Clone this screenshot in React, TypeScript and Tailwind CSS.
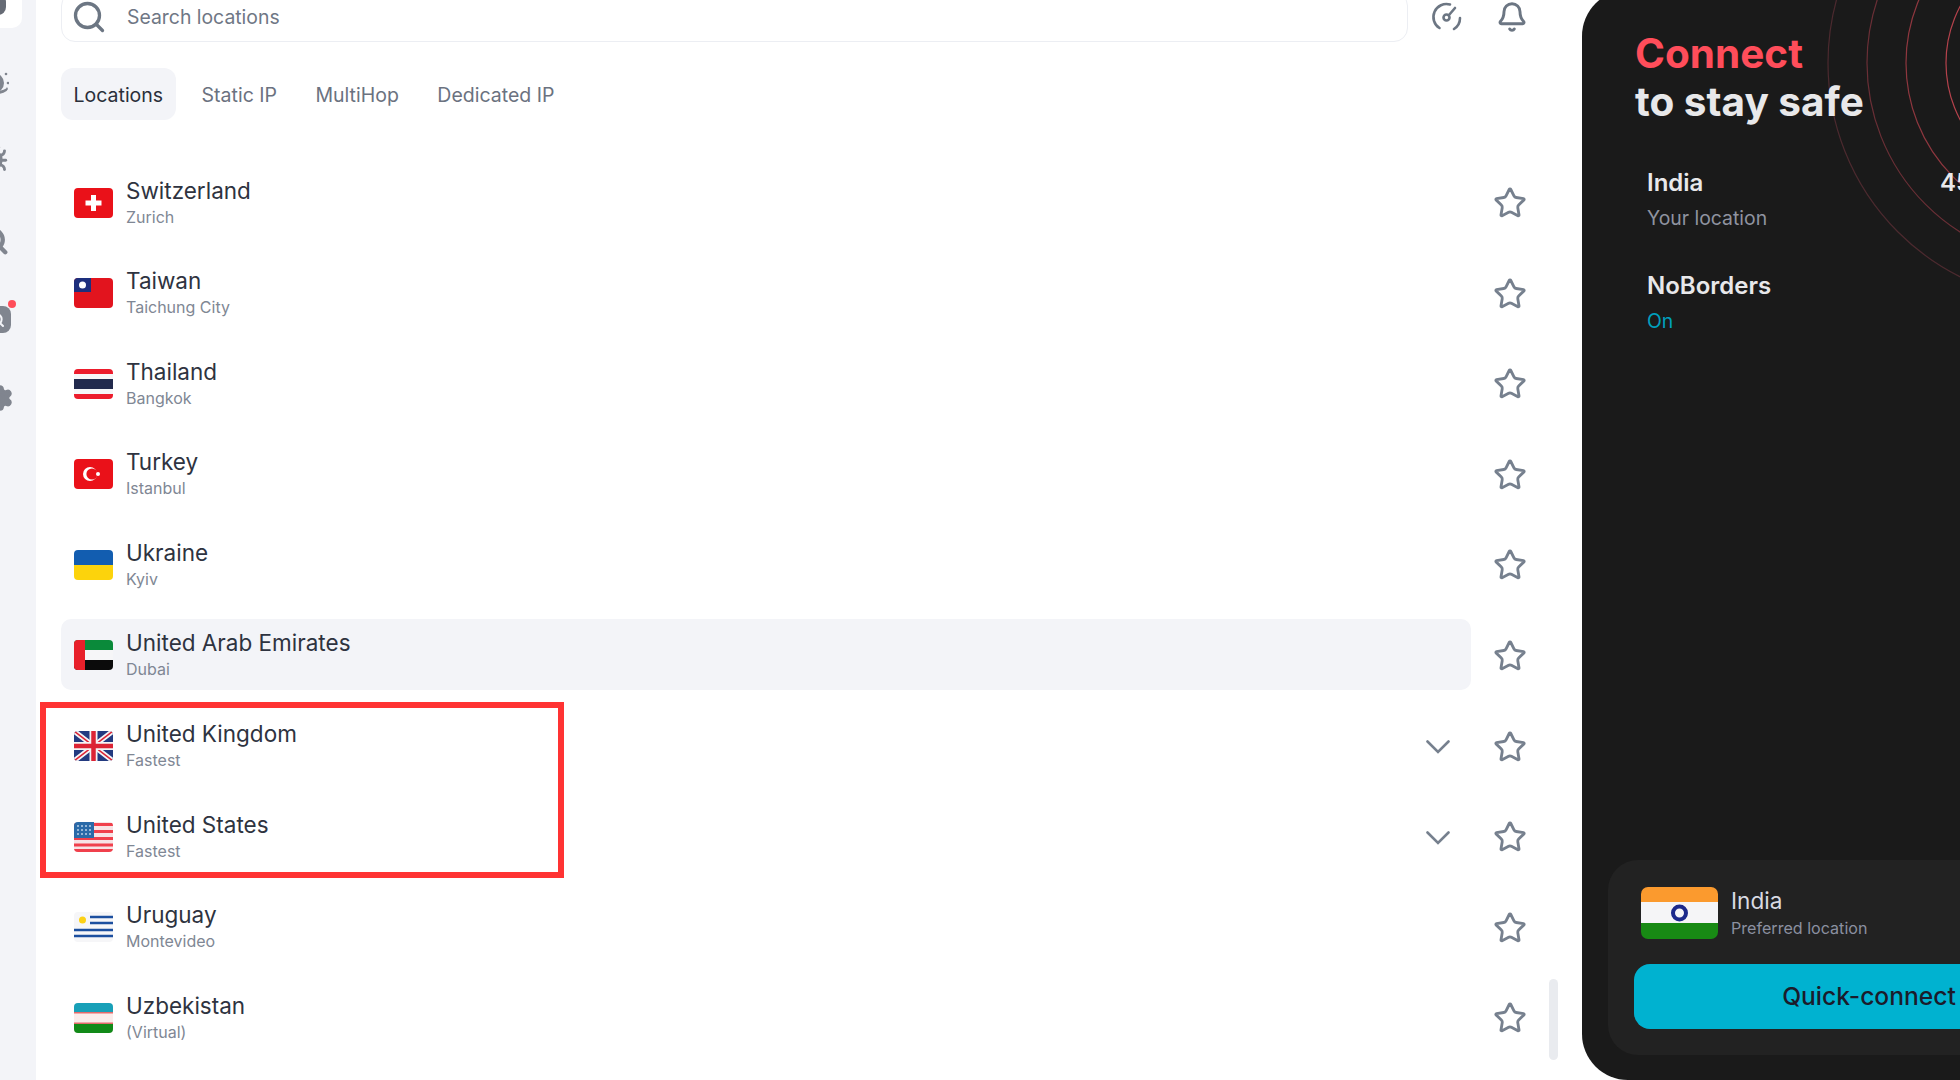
import { Bell, Bug, Search, Settings, Star } from "lucide-react";
import type { ReactNode } from "react";

function FlagBox({ children }: { children: ReactNode }) {
  return (
    <svg viewBox="0 0 39 30" className="mt-[2px] h-[30px] w-[39px] shrink-0 rounded-[4px]">
      {children}
    </svg>
  );
}

const flags: Record<string, ReactNode> = {
  ch: (
    <>
      <rect width="39" height="30" fill="#ea1119" />
      <path d="M17 7h5v5.500h5.500v5H22V23h-5v-5.500h-5.500v-5H17z" fill="#fff" />
    </>
  ),
  tw: (
    <>
      <rect width="39" height="30" fill="#e2141e" />
      <rect width="17" height="14" fill="#1d2f7d" />
      <circle cx="8.500" cy="7" r="3.500" fill="#fff" />
    </>
  ),
  th: (
    <>
      <rect width="39" height="30" fill="#ec1c2c" />
      <rect y="5" width="39" height="20" fill="#f6f6f8" />
      <rect y="10" width="39" height="10" fill="#222a4d" />
    </>
  ),
  tr: (
    <>
      <rect width="39" height="30" fill="#ea1119" />
      <circle cx="16" cy="15" r="7" fill="#fff" />
      <circle cx="18" cy="15" r="5.600" fill="#ea1119" />
      <circle cx="24" cy="15" r="2" fill="#fff" />
    </>
  ),
  ua: (
    <>
      <rect width="39" height="15" fill="#125db0" />
      <rect y="15" width="39" height="15" fill="#fcd30c" />
    </>
  ),
  ae: (
    <>
      <rect width="39" height="10" fill="#0a8a3a" />
      <rect y="10" width="39" height="10" fill="#f6f6f8" />
      <rect y="20" width="39" height="10" fill="#0b0b0b" />
      <rect width="11" height="30" fill="#e8202a" />
    </>
  ),
  gb: (
    <>
      <rect width="39" height="30" fill="#233a80" />
      <path d="M0 0l39 30M39 0L0 30" stroke="#f4f4f6" strokeWidth="5" />
      <path d="M0 0l39 30M39 0L0 30" stroke="#dc2435" strokeWidth="1.500" />
      <path d="M19.500 0v30M0 15h39" stroke="#f4f4f6" strokeWidth="8" />
      <path d="M19.500 0v30M0 15h39" stroke="#dc2435" strokeWidth="4.500" />
    </>
  ),
  us: (
    <>
      <rect width="39" height="30" fill="#f7e3e5" />
      <path d="M0 2.500h39M0 9.500h39M0 16.500h39M0 23h39M0 28.500h39" stroke="#f0404c" strokeWidth="3" />
      <rect width="20" height="16" fill="#2a6aa8" />
      <path d="M3 4h14M3 8h14M3 12h14" stroke="#b9d0e6" strokeWidth="1.500" strokeDasharray="2 2" />
    </>
  ),
  uy: (
    <>
      <rect width="39" height="30" fill="#f6f6f8" />
      <path d="M16 5h23M16 11h23M0 18h39M0 24h39" stroke="#1c4f9f" strokeWidth="2.500" />
      <circle cx="8.500" cy="8" r="3.500" fill="#fcd116" />
    </>
  ),
  uz: (
    <>
      <rect width="39" height="30" fill="#fbeceb" />
      <rect width="39" height="9" fill="#18a0b8" />
      <rect y="9" width="39" height="1.500" fill="#e66a6a" />
      <rect y="19.500" width="39" height="1.500" fill="#e66a6a" />
      <rect y="21" width="39" height="9" fill="#128a18" />
    </>
  ),
};

const locations = [
  { name: "Switzerland", sub: "Zurich", flag: "ch" },
  { name: "Taiwan", sub: "Taichung City", flag: "tw" },
  { name: "Thailand", sub: "Bangkok", flag: "th" },
  { name: "Turkey", sub: "Istanbul", flag: "tr" },
  { name: "Ukraine", sub: "Kyiv", flag: "ua" },
  { name: "United Arab Emirates", sub: "Dubai", flag: "ae", hover: true },
  { name: "United Kingdom", sub: "Fastest", flag: "gb", expand: true },
  { name: "United States", sub: "Fastest", flag: "us", expand: true },
  { name: "Uruguay", sub: "Montevideo", flag: "uy" },
  { name: "Uzbekistan", sub: "(Virtual)", flag: "uz" },
];

function LocationRow({ name, sub, flag, hover, expand }: { name: string; sub: string; flag: string; hover?: boolean; expand?: boolean }) {
  return (
    <div className="flex h-[71px] items-center">
      <div className={`flex h-full w-[1410px] items-center gap-[13px] rounded-[10px] pl-[13px] pr-[21px] ${hover ? "bg-[#f3f4f8]" : ""}`}>
        <FlagBox>{flags[flag]}</FlagBox>
        <div className="flex-1 pt-[4px]">
          <div className="text-[22.500px] leading-[26px] text-[#2e3340]">{name}</div>
          <div className="text-[16px] leading-[26px] text-[#7f8794]">{sub}</div>
        </div>
        {expand && (
          <svg viewBox="0 0 24 14" className="mt-[4px] h-[14px] w-[24px] text-[#76808e]" fill="none" stroke="currentColor" strokeWidth="2.600" strokeLinecap="round">
            <path d="M1.500 1.500L12 12 22.500 1.500" />
          </svg>
        )}
      </div>
      <Star size={34} strokeWidth={2} className="ml-[22px] mt-[3px] text-[#76808e]" />
    </div>
  );
}

function Sidebar() {
  return (
    <aside className="flex h-full w-[36px] shrink-0 flex-col overflow-hidden bg-[#f3f4f8] text-[#80858f]">
      <div className="h-[28px] w-[22px] overflow-hidden rounded-br-[10px] bg-white">
        <div className="-mt-[6px] -ml-[10px] h-[21px] w-[16px] rounded-full bg-[#666b75]" />
      </div>
      <svg viewBox="0 0 26 26" className="mt-[42px] -ml-[17px] h-[26px] w-[26px] shrink-0" fill="currentColor">
        <circle cx="11" cy="13" r="10" />
        <circle cx="23" cy="4" r="1.300" />
        <circle cx="25" cy="13" r="1.300" />
        <path d="M12 21a12 4 0 0 0 12-4l1 2a12 6 0 0 1-13 5z" />
      </svg>
      <Bug size={28} fill="currentColor" strokeWidth={2.500} className="mt-[49px] -ml-[20px] shrink-0" />
      <Search size={30} strokeWidth={3.500} className="mt-[53px] -ml-[21px] shrink-0" />
      <div className="relative mt-[50px] -ml-[16px] h-[27px] w-[27px] shrink-0 rounded-[8px] bg-current">
        <span className="absolute -top-[6px] left-[24px] h-[8px] w-[8px] rounded-full bg-[#ff4d5a]" />
        <Search size={16} strokeWidth={3} className="absolute left-[5px] top-[6px] text-[#f3f4f8]" />
      </div>
      <Settings size={28} fill="currentColor" strokeWidth={2} className="mt-[51px] -ml-[14px] shrink-0" />
    </aside>
  );
}

function GaugeIcon() {
  return (
    <svg viewBox="0 0 32 32" className="h-[32px] w-[32px] text-[#6c7683]" fill="none" stroke="currentColor" strokeWidth="2.600" strokeLinecap="round">
      <path d="M19 3.500A13 13 0 0 0 8.500 27" />
      <path d="M23 28a13 13 0 0 0 6-11" />
      <circle cx="15.500" cy="16.500" r="3" />
      <path d="M18 14l6-7" />
    </svg>
  );
}

function TopBar() {
  return (
    <div className="flex items-center">
      <div className="flex h-[50px] w-[1347px] items-center rounded-[14px] border border-[#eceef3] pl-[9px]">
        <Search size={36} strokeWidth={2.200} className="text-[#6c7683]" />
        <span className="ml-[20px] pt-[2px] text-[19.400px] text-[#6f7785]">Search locations</span>
      </div>
      <div className="ml-[23px]">
        <GaugeIcon />
      </div>
      <Bell size={32} strokeWidth={2.200} className="ml-[33px] text-[#6c7683]" />
    </div>
  );
}

function Tabs() {
  const tabs = ["Static IP", "MultiHop", "Dedicated IP"];
  return (
    <div className="mt-[26px] flex items-center gap-[13.500px]">
      <div className="flex h-[52px] items-center rounded-[12px] bg-[#f3f4f8] px-[12.500px] pt-[4px] text-[19.500px] text-[#2a2f3a]">Locations</div>
      {tabs.map((tab) => (
        <div key={tab} className="flex h-[52px] items-center px-[12.500px] pt-[4px] text-[19.500px] text-[#6b7280]">
          {tab}
        </div>
      ))}
    </div>
  );
}

function ConnectPanel() {
  return (
    <section className="relative -mt-[10px] flex h-[1090px] w-[574px] shrink-0 flex-col overflow-hidden rounded-l-[46px] bg-[#1a1a1a]">
      <svg className="absolute inset-0 h-full w-full" fill="none">
        <circle cx="485" cy="73" r="239" stroke="#4c2a2f" strokeWidth="1.200" />
        <circle cx="485" cy="73" r="200" stroke="#6a2f36" strokeWidth="1.200" />
        <circle cx="485" cy="73" r="161" stroke="#8f373f" strokeWidth="1.200" />
        <circle cx="485" cy="73" r="121" stroke="#b5424c" strokeWidth="1.200" />
      </svg>
      <h1 className="relative mt-[40px] ml-[53px] text-[40.500px] font-bold leading-[48px] text-[#e8e8ea]">
        <span className="block text-[#ff4d5a]">Connect</span>
        to stay safe
      </h1>
      <div className="relative mt-[44px] ml-[65px] flex">
        <div className="w-[293px]">
          <div className="text-[24px] font-semibold leading-[26px] text-[#e8e8ea]">India</div>
          <div className="mt-[9px] text-[19.400px] leading-[26px] text-[#8f93a0]">Your location</div>
        </div>
        <div className="text-[24px] font-semibold leading-[26px] text-[#e8e8ea]">45</div>
      </div>
      <div className="relative mt-[42px] ml-[65px]">
        <div className="text-[24px] font-semibold leading-[26px] text-[#e8e8ea]">NoBorders</div>
        <div className="mt-[9px] text-[19.400px] leading-[26px] text-[#00a0bd]">On</div>
      </div>
      <div className="relative mt-auto mb-[25px] ml-[26px] h-[195px] w-[522px] rounded-[30px] bg-[#222222] px-[26px] pt-[27px]">
        <div className="flex items-start pl-[7px]">
          <svg viewBox="0 0 77 52" className="h-[52px] w-[77px] rounded-[7px]">
            <rect width="77" height="15" fill="#fb9a2e" />
            <rect y="15" width="77" height="22" fill="#f5f5f7" />
            <rect y="36" width="77" height="16" fill="#188a14" />
            <circle cx="38.500" cy="26" r="6.500" fill="none" stroke="#1c2a8c" strokeWidth="4" />
          </svg>
          <div className="ml-[13px]">
            <div className="text-[22.600px] leading-[28px] text-[#d9dbe3]">India</div>
            <div className="text-[16.100px] leading-[26px] text-[#8b90a0]">Preferred location</div>
          </div>
        </div>
        <button type="button" className="mt-[23px] h-[65px] w-[470px] rounded-[16px] bg-[#00b2d0] text-[24.600px] font-medium text-[#1b1b2b]">
          Quick-connect
        </button>
      </div>
    </section>
  );
}

export default function App() {
  return (
    <div className="relative flex h-[1080px] w-full overflow-hidden bg-white font-['Inter',sans-serif]">
      <Sidebar />
      <main className="-mt-[8px] w-[1546px] shrink-0 pl-[25px]">
        <TopBar />
        <Tabs />
        <div className="mt-[46px] flex flex-col gap-[19.600px]">
          {locations.map((location) => (
            <LocationRow key={location.name} {...location} />
          ))}
        </div>
      </main>
      <ConnectPanel />
      <div className="absolute left-[1549px] top-[979px] h-[81px] w-[9px] rounded-full bg-[#e9ebef]" />
      <div className="absolute left-[40px] top-[702px] h-[176px] w-[524px] border-[6px] border-[#ff3333]" />
    </div>
  );
}
